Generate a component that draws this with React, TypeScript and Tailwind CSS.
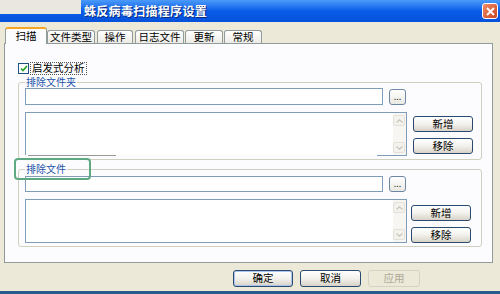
import React from 'react'

const cjk = { fontFamily: '"Noto Sans CJK SC", "Liberation Sans", sans-serif' }

function Tab({ label, active, w }: { label: string; active?: boolean; w: string }) {
  if (active) {
    return (
      <div
        className={`${w} h-[17px] -mb-px relative z-10 flex items-center justify-center bg-[#fcfcfe] border-x border-[#919b9c] border-t-2 border-t-[#f5a623] rounded-t-[3px] text-[10.5px] leading-none text-black`}
      >
        {label}
      </div>
    )
  }
  return (
    <div
      className={`${w} h-[13px] flex items-center justify-center bg-linear-to-b from-white to-[#ecebe5] border border-b-0 border-[#919b9c] rounded-t-[3px] text-[10.5px] leading-none text-black`}
    >
      {label}
    </div>
  )
}

function XpButton({ label, w, h, def, disabled }: { label: string; w: string; h: string; def?: boolean; disabled?: boolean }) {
  if (disabled) {
    return (
      <div className={`${w} ${h} flex items-center justify-center border border-[#d4d2c6] rounded-[3px] text-[10.5px] leading-none text-[#aca899]`}>
        {label}
      </div>
    )
  }
  return (
    <div
      className={`${w} ${h} flex items-center justify-center border border-[#2b4a6f] rounded-[3px] bg-linear-to-b from-white via-[#f2f1ec] to-[#d8d3c8] text-[10.5px] leading-none text-black ${def ? 'shadow-[inset_0_0_0_1px_#a9c3ee]' : ''}`}
    >
      {label}
    </div>
  )
}

function Scrollbar() {
  return (
    <div className="absolute right-0 top-0 bottom-0 w-[13px] bg-[#f7f6f2] flex flex-col justify-between py-[2px] pr-[1px]">
      <div className="h-[11px] border border-[#e4e2d8] rounded-[2px] bg-[#f3f2ec] flex items-center justify-center">
        <svg width="7" height="4" viewBox="0 0 7 4"><path d="M0.5 3.5 L3.5 0.8 L6.5 3.5" stroke="#c8c6bb" strokeWidth="1.2" fill="none" /></svg>
      </div>
      <div className="h-[11px] border border-[#e4e2d8] rounded-[2px] bg-[#f3f2ec] flex items-center justify-center">
        <svg width="7" height="4" viewBox="0 0 7 4"><path d="M0.5 0.5 L3.5 3.2 L6.5 0.5" stroke="#c8c6bb" strokeWidth="1.2" fill="none" /></svg>
      </div>
    </div>
  )
}

function Browse({ h }: { h: string }) {
  return (
    <div className={`w-[17px] ${h} ml-[6px] flex items-end justify-center pb-[3px] border border-[#6f87a6] rounded-[3px] bg-linear-to-b from-white to-[#e9e8e2] text-[9px] leading-none text-[#333]`}>
      ...
    </div>
  )
}

export default function App() {
  return (
    <div className="w-[500px] h-[294px] overflow-hidden bg-[#ece9d8] flex flex-col relative" style={cjk}>
      {/* title bar */}
      <div className="h-[22px] shrink-0 flex items-center bg-linear-to-b from-[#4a9af9] via-[#0a5ce8] to-[#0552dc] relative">
        <span className="pl-[84px] text-[12px] font-bold text-white leading-none tracking-[0.3px] [text-shadow:1px_1px_0_#0a2a7a]">
          蛛反病毒扫描程序设置
        </span>
        <div className="ml-auto mr-[2px] w-[16px] h-[16px] rounded-[3px] border border-white bg-linear-to-br from-[#f08b66] to-[#c9431e] flex items-center justify-center">
          <svg width="9" height="9" viewBox="0 0 9 9"><path d="M1 1 L8 8 M8 1 L1 8" stroke="white" strokeWidth="1.8" /></svg>
        </div>
        <div className="absolute left-0 top-0 w-[81px] h-[14px] bg-[#e9e7df]" />
      </div>

      {/* tabs */}
      <div className="h-[21px] shrink-0 pl-[5px] flex items-end">
        <Tab label="扫描" active w="w-[42px]" />
        <Tab label="文件类型" w="w-[48px]" />
        <div className="w-[2px]" />
        <Tab label="操作" w="w-[36px]" />
        <div className="w-[2px]" />
        <Tab label="日志文件" w="w-[49px]" />
        <div className="w-[1px]" />
        <Tab label="更新" w="w-[38px]" />
        <div className="w-[1px]" />
        <Tab label="常规" w="w-[38px]" />
      </div>

      {/* panel */}
      <div className="ml-[4px] w-[489px] h-[220px] shrink-0 border border-[#919b9c] bg-[#fcfcfe]">
        <div className="mt-[18px] pl-[13px] flex items-center h-[13px]">
          <div className="w-[11px] h-[11px] border border-[#1c5180] bg-white flex items-center justify-center">
            <svg width="8" height="7" viewBox="0 0 8 7"><path d="M1 3.5 L3 5.5 L7 1" stroke="#21a121" strokeWidth="1.6" fill="none" /></svg>
          </div>
          <span className="ml-[1px] px-[1px] h-[13px] flex items-center border border-dotted border-[#555] text-[10.5px] leading-none text-black">启发式分析</span>
        </div>

        {/* group 1 */}
        <div className="mt-[7px] ml-[13px] w-[464px] h-[78px] border border-[#d0d0bf] rounded-[3px] relative pt-[5px] pl-[6px]">
          <span className="absolute left-[6px] -top-[6px] px-[1px] bg-[#fcfcfe] text-[10px] leading-none text-[#2352a8]">排除文件夹</span>
          <div className="flex">
            <div className="w-[358px] h-[17px] border border-[#7f9db9] bg-white" />
            <Browse h="h-[16px] mt-[1px]" />
          </div>
          <div className="flex mt-[7px]">
            <div className="w-[382px] h-[43px] border border-b-0 border-[#7f9db9] bg-white relative">
              <Scrollbar />
              <div className="absolute left-[2px] -bottom-px w-[88px] h-px bg-[#9a9a9a]" />
              <div className="absolute right-[-1px] -bottom-px w-[30px] h-px bg-[#7f9db9]" />
            </div>
            <div className="ml-[6px] flex flex-col gap-[6px] mt-[4px]">
              <XpButton label="新增" w="w-[60px]" h="h-[16px]" />
              <XpButton label="移除" w="w-[60px]" h="h-[16px]" />
            </div>
          </div>
        </div>

        {/* group 2 */}
        <div className="mt-[9px] ml-[13px] w-[464px] h-[78px] border border-[#d0d0bf] rounded-[3px] relative pt-[6px] pl-[6px]">
          <span className="absolute left-[6px] -top-[6px] px-[1px] bg-[#fcfcfe] text-[10px] leading-none text-[#2352a8]">排除文件</span>
          <div className="absolute -left-[5px] -top-[12px] w-[77px] h-[22px] border-[2px] border-[#5fa982] rounded-[4px]" />
          <div className="flex">
            <div className="w-[358px] h-[16px] border border-[#7f9db9] bg-white" />
            <Browse h="h-[16px]" />
          </div>
          <div className="flex mt-[7px]">
            <div className="w-[382px] h-[44px] border border-[#7f9db9] bg-white relative">
              <Scrollbar />
            </div>
            <div className="ml-[4px] flex flex-col gap-[6px] mt-[6px]">
              <XpButton label="新增" w="w-[60px]" h="h-[16px]" />
              <XpButton label="移除" w="w-[60px]" h="h-[16px]" />
            </div>
          </div>
        </div>
      </div>

      {/* bottom buttons */}
      <div className="mt-[7px] pl-[233px] flex gap-[7px]">
        <XpButton label="确定" w="w-[60px]" h="h-[17px]" def />
        <XpButton label="取消" w="w-[61px]" h="h-[17px]" />
        <XpButton label="应用" w="w-[52px]" h="h-[17px]" disabled />
      </div>

      <div className="mt-auto h-[3px] bg-[#2a5a8e]" />
    </div>
  )
}
